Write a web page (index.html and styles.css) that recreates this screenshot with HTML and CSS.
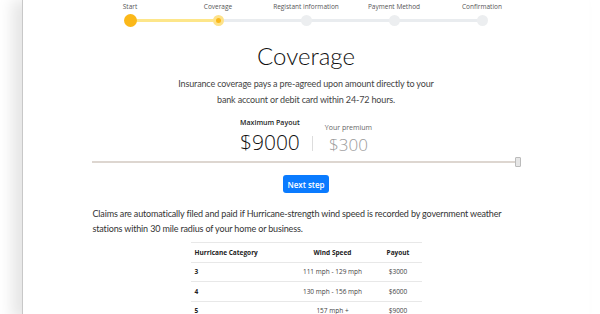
FILE: index.html
```html
<!DOCTYPE html>
<html>
 <head>
  <title>Coverage</title>
  <link rel="stylesheet" href="styles.css">
 </head>
<body>
<div class="page">
 <ol class="steps">
  <li class="step done"><span class="step-label">Start</span><span class="dot"></span></li>
  <li class="step current"><span class="step-label">Coverage</span><span class="dot"></span></li>
  <li class="step"><span class="step-label">Registant information</span><span class="dot"></span></li>
  <li class="step"><span class="step-label">Payment Method</span><span class="dot"></span></li>
  <li class="step last"><span class="step-label">Confirmation</span><span class="dot"></span></li>
 </ol>

 <h1 class="title">Coverage</h1>
 <p class="lead">Insurance coverage pays a pre-agreed upon amount directly to your<br>bank account or debit card within 24-72 hours.</p>

 <div class="amounts">
  <div class="amount">
   <div class="amount-label">Maximum Payout</div>
   <div class="amount-value">$9000</div>
  </div>
  <div class="amount-sep"></div>
  <div class="amount premium">
   <div class="amount-label">Your premium</div>
   <div class="amount-value">$300</div>
  </div>
 </div>

 <div class="slider"><span class="slider-track"></span><span class="slider-thumb"></span></div>

 <div class="actions"><button class="btn">Next step</button></div>

 <p class="claims">Claims are automatically filed and paid if Hurricane-strength wind speed is recorded by government weather stations within 30 mile radius of your home or business.</p>

 <table class="payouts">
  <thead>
   <tr><th class="cat">Hurricane Category</th><th>Wind Speed</th><th>Payout</th></tr>
  </thead>
  <tbody>
   <tr><td class="cat">3</td><td>111 mph - 129 mph</td><td>$3000</td></tr>
   <tr><td class="cat">4</td><td>130 mph - 156 mph</td><td>$6000</td></tr>
   <tr><td class="cat">5</td><td>157 mph +</td><td>$9000</td></tr>
  </tbody>
 </table>
</div>
</body>
</html>
```

FILE: styles.css
```css
body {
 margin: 0;
 background: #fff;
 font-family: "Open Sans", sans-serif;
 color: #333;
 overflow: hidden;
}

.page {
 margin-left: 22px;
 width: 566px;
 min-height: 314px;
 border-left: 1px solid #c8c8c8;
 box-shadow: -10px 0 14px rgba(0, 0, 0, 0.10);
 background: #fff;
}

/* stepper */
.steps {
 list-style: none;
 margin: 0 auto;
 padding: 2px 0 0;
 width: 440px;
 display: grid;
 grid-template-columns: repeat(5, 1fr);
}
.step {
 position: relative;
 display: flex;
 flex-direction: column;
 align-items: center;
 gap: 3px;
}
.step-label {
 font-size: 6.5px;
 line-height: 10px;
 color: #555;
}
.step::after {
 content: "";
 position: absolute;
 left: 50%;
 width: 100%;
 top: 17px;
 height: 3px;
 background: #e9ecef;
 z-index: 0;
}
.step.done::after { background: #fde68a; }
.step.last::after { display: none; }
.dot {
 position: relative;
 z-index: 1;
 width: 11px;
 height: 11px;
 border-radius: 50%;
 background: #eceef0;
}
.done .dot {
 width: 13px;
 height: 13px;
 margin-top: -1px;
 background: #fbb819;
}
.current .dot {
 background: #fbb819;
 border: 3px solid #fde28a;
 width: 5px;
 height: 5px;
}

/* heading */
.title {
 margin: 14px 0 0;
 text-align: center;
 font-family: Lato, sans-serif;
 font-weight: 300;
 font-size: 24px;
 line-height: 30px;
 color: #111;
}
.lead {
 margin: 5px 0 0;
 text-align: center;
 font-family: Lato, sans-serif;
 font-size: 9px;
 letter-spacing: -0.15px;
 line-height: 16px;
 color: #444;
}

/* amounts */
.amounts {
 display: flex;
 justify-content: center;
 align-items: flex-end;
 gap: 12px;
 margin-top: 10px;
}
.amount {
 display: flex;
 flex-direction: column;
 align-items: center;
}
.amount-label {
 font-size: 7px;
 line-height: 10px;
 font-weight: 600;
 color: #222;
}
.amount-value {
 font-size: 21px;
 line-height: 29px;
 font-weight: 300;
 color: #111;
}
.premium .amount-label {
 font-weight: 500;
 color: #666;
}
.premium .amount-value {
 font-size: 17px;
 line-height: 24px;
 color: #9a9a9a;
}
.amount-sep {
 width: 1px;
 height: 15px;
 margin-bottom: 6px;
 background: #ddd;
}

/* slider */
.slider {
 display: flex;
 align-items: center;
 width: 429px;
 margin: 0 auto;
}
.slider-track {
 flex: 1;
 height: 2px;
 background: #ddd6d0;
}
.slider-thumb {
 width: 4px;
 height: 8px;
 border: 1px solid #bbb;
 border-radius: 1px;
 background: #e6e6e6;
}

/* button */
.actions {
 display: flex;
 justify-content: center;
 margin-top: 8px;
}
.btn {
 border: 0;
 border-radius: 3px;
 background: #0a7bff;
 color: #fff;
 font-family: "Open Sans", sans-serif;
 font-size: 8px;
 font-weight: 600;
 width: 46px;
 height: 18px;
 padding: 0;
}

/* claims */
.claims {
 width: 427px;
 margin: 13px auto 0;
 font-family: Lato, sans-serif;
 font-size: 9px;
 letter-spacing: -0.15px;
 line-height: 15px;
 color: #333;
}

/* table */
.payouts {
 margin: 6px auto 0;
 width: 231px;
 border-collapse: collapse;
 font-size: 6.5px;
 color: #222;
}
.payouts th, .payouts td {
 border-top: 1px solid #e8e8e8;
 padding: 0 4px;
 height: 18.5px;
 text-align: center;
}
.payouts th { font-weight: 700; }
.payouts td { color: #444; }
.payouts .cat {
 text-align: left;
 width: 92px;
 font-weight: 700;
 color: #222;
}
.payouts th:nth-child(2) { width: 76px; }
```
